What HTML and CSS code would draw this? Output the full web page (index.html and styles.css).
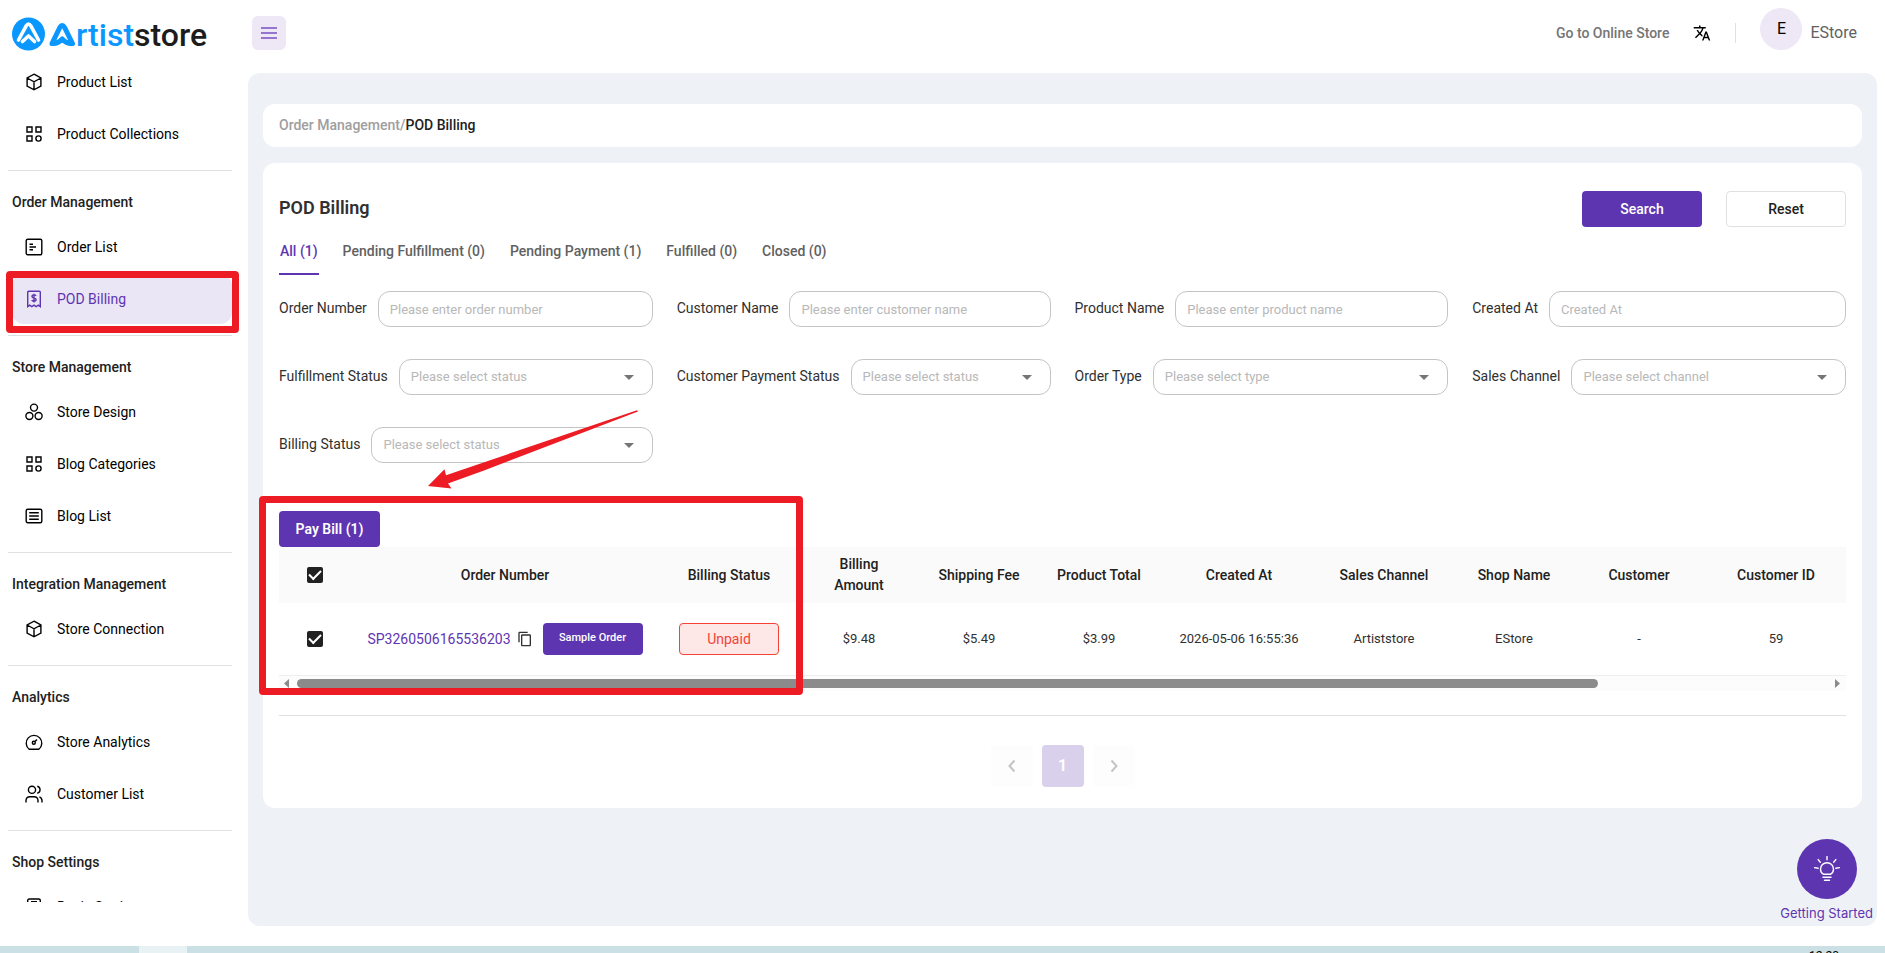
FILE: index.html
```html
<!DOCTYPE html>
<html lang="en">
<head>
<meta charset="utf-8">
<title>POD Billing - Artiststore</title>
<meta name="viewport" content="width=device-width, initial-scale=1">
<link rel="stylesheet" href="styles.css">
</head>
<body>
<svg class="defs" aria-hidden="true">
  <symbol id="i-box" viewBox="0 0 18 18"><path d="M9 1.2 15.9 5v8L9 16.8 2.1 13V5zM2.1 5 9 8.8 15.9 5M9 8.8v8" /></symbol>
  <symbol id="i-grid" viewBox="0 0 18 18"><path d="M2 2h5v5H2zM11 2h5v5h-5zM2 11h5v5H2z"/><circle cx="13.5" cy="13.5" r="2.6"/></symbol>
  <symbol id="i-order" viewBox="0 0 18 18"><rect x="1.2" y="1.2" width="15.6" height="15.6" rx="1.5"/><path d="M4.5 6.2H8M4.5 9H11M4.5 11.8H8"/></symbol>
  <symbol id="i-bill" viewBox="0 0 18 18"><path d="M2.7 16.6V2.2c0-.6.4-1 1-1h10.600c.6 0 1 .4 1 1v14.400l-2-1.400-2.100 1.400-2.200-1.400-2.200 1.400-2.100-1.400z"/><path d="M11 5.900C10.700 5.200 10 4.900 9 4.900c-1.200 0-2 .6-2 1.500 0 2.200 4.100.9 4.100 3.200 0 1-.9 1.600-2.100 1.600-1.100 0-1.900-.4-2.200-1.200M9 3.700v8.700"/></symbol>
  <symbol id="i-circles" viewBox="0 0 18 18"><circle cx="9" cy="4.600" r="3.500"/><circle cx="4.400" cy="13" r="3.500"/><circle cx="13.600" cy="13" r="3.500"/></symbol>
  <symbol id="i-list" viewBox="0 0 18 18"><rect x="1.200" y="2.200" width="15.600" height="13.600" rx="1.500"/><path d="M4.200 5.800h9.600M4.200 9h9.600M4.200 12.200h9.600"/></symbol>
  <symbol id="i-gauge" viewBox="0 0 18 18"><path d="M4.200 16.300A7.800 7.800 0 1 1 13.800 16.300z"/><circle cx="8.800" cy="9.800" r="1.500"/><path d="m10 8.600 2-2"/></symbol>
  <symbol id="i-users" viewBox="0 0 18 18"><circle cx="7" cy="4.800" r="3.600"/><path d="M1 17.500v-1.800c0-2.300 1.700-4 4-4h4c2.300 0 4 1.700 4 4v1.800M12.300 1.300a3.600 3.600 0 0 1 0 7M14.400 11.900c1.600.6 2.600 2 2.600 3.800v1.800"/></symbol>
  <symbol id="i-doc" viewBox="0 0 18 18"><rect x="2.700" y="1" width="12.600" height="16" rx="1.500"/><path d="M6 3.800h6M6 8h6"/></symbol>
  <symbol id="i-caret" viewBox="0 0 10 5"><path d="M0 0h10L5 5z"/></symbol>
</svg>

<div class="app">
  <aside class="sidebar">
    <a class="logo" href="#" aria-label="Artiststore">
      <svg class="logo-mark" viewBox="0 0 64 34" aria-hidden="true">
        <circle cx="16.500" cy="17" r="16.500" fill="#0a97ff"/>
        <path d="M6.500 23 14.300 8.700q2.200-3.500 4.400 0L26.500 23" fill="none" stroke="#fff" stroke-width="3.600" stroke-linecap="round" stroke-linejoin="round"/>
        <path d="m10.500 24.500 6-5.500 6 5.500" fill="none" stroke="#fff" stroke-width="3.600" stroke-linecap="round" stroke-linejoin="round"/>
        <path d="M40 26.500 47.800 10.500q2.400-4.200 4.800 0L60.500 26.500q-5.500.8-10.300-4.500-4.800 5.300-10.200 4.500z" fill="none" stroke="#0a97ff" stroke-width="5" stroke-linejoin="round"/>
      </svg>
      <span class="logo-text"><span class="logo-blue">rtist</span>store</span>
    </a>
    <nav class="nav">
      <div class="nav-group">
        <a class="nav-item" href="#"><svg class="icon"><use href="#i-box"/></svg>Product List</a>
        <a class="nav-item" href="#"><svg class="icon"><use href="#i-grid"/></svg>Product Collections</a>
      </div>
      <div class="nav-group">
        <h2 class="nav-title">Order Management</h2>
        <a class="nav-item" href="#"><svg class="icon"><use href="#i-order"/></svg>Order List</a>
        <a class="nav-item nav-item-active" href="#"><svg class="icon"><use href="#i-bill"/></svg>POD Billing<span class="mark mark-nav"></span></a>
      </div>
      <div class="nav-group">
        <h2 class="nav-title">Store Management</h2>
        <a class="nav-item" href="#"><svg class="icon"><use href="#i-circles"/></svg>Store Design</a>
        <a class="nav-item" href="#"><svg class="icon"><use href="#i-grid"/></svg>Blog Categories</a>
        <a class="nav-item" href="#"><svg class="icon"><use href="#i-list"/></svg>Blog List</a>
      </div>
      <div class="nav-group">
        <h2 class="nav-title">Integration Management</h2>
        <a class="nav-item" href="#"><svg class="icon"><use href="#i-box"/></svg>Store Connection</a>
      </div>
      <div class="nav-group">
        <h2 class="nav-title">Analytics</h2>
        <a class="nav-item" href="#"><svg class="icon"><use href="#i-gauge"/></svg>Store Analytics</a>
        <a class="nav-item" href="#"><svg class="icon"><use href="#i-users"/></svg>Customer List</a>
      </div>
      <div class="nav-group">
        <h2 class="nav-title">Shop Settings</h2>
        <a class="nav-item" href="#"><svg class="icon"><use href="#i-doc"/></svg>Basic Settings</a>
      </div>
    </nav>
  </aside>

  <div class="content">
    <header class="topbar">
      <button class="menu-btn" type="button" aria-label="Toggle menu">
        <svg viewBox="0 0 16 14" width="16" height="14"><path d="M0 2h16M0 7h16M0 12h16"/></svg>
      </button>
      <div class="topbar-right">
        <a class="store-link" href="#">Go to Online Store</a>
        <button class="lang-btn" type="button" aria-label="Language">
          <svg viewBox="0 0 24 24" width="18" height="18"><path d="m12.870 15.070-2.540-2.510.03-.03c1.740-1.940 2.980-4.170 3.710-6.530H17V4h-7V2H8v2H1v1.990h11.170C11.500 7.920 10.440 9.750 9 11.350 8.070 10.320 7.300 9.190 6.690 8h-2c.73 1.630 1.730 3.170 2.980 4.560l-5.090 5.020L4 19l5-5 3.110 3.110zM18.500 10h-2L12 22h2l1.120-3h4.750L21 22h2zm-2.620 7 1.620-4.330L19.120 17z"/></svg>
        </button>
        <span class="divider"></span>
        <button class="account" type="button"><span class="avatar">E</span><span class="account-name">EStore</span></button>
      </div>
    </header>

    <main class="main">
      <nav class="card crumbs" aria-label="Breadcrumb"><a class="crumb" href="#">Order Management</a><span class="crumb">/</span><span class="crumb-now">POD Billing</span></nav>

      <section class="card panel">
        <div class="panel-head">
          <h1 class="title">POD Billing</h1>
          <div class="actions">
            <button class="btn btn-primary btn-wide" type="button">Search</button>
            <button class="btn btn-outline btn-wide" type="button">Reset</button>
          </div>
        </div>

        <div class="tabs" role="tablist">
          <button class="tab tab-active" role="tab" type="button" aria-selected="true">All (1)</button>
          <button class="tab" role="tab" type="button">Pending Fulfillment (0)</button>
          <button class="tab" role="tab" type="button">Pending Payment (1)</button>
          <button class="tab" role="tab" type="button">Fulfilled (0)</button>
          <button class="tab" role="tab" type="button">Closed (0)</button>
        </div>

        <form class="filters">
          <div class="field"><label for="f-order">Order Number</label><input class="control" id="f-order" type="text" placeholder="Please enter order number"></div>
          <div class="field"><label for="f-name">Customer Name</label><input class="control" id="f-name" type="text" placeholder="Please enter customer name"></div>
          <div class="field"><label for="f-product">Product Name</label><input class="control" id="f-product" type="text" placeholder="Please enter product name"></div>
          <div class="field"><label for="f-created">Created At</label><input class="control" id="f-created" type="text" placeholder="Created At"></div>
          <div class="field"><label for="f-ful">Fulfillment Status</label><div class="select-box"><select class="control" id="f-ful"><option>Please select status</option></select><svg class="caret"><use href="#i-caret"/></svg></div></div>
          <div class="field"><label for="f-pay">Customer Payment Status</label><div class="select-box"><select class="control" id="f-pay"><option>Please select status</option></select><svg class="caret"><use href="#i-caret"/></svg></div></div>
          <div class="field"><label for="f-type">Order Type</label><div class="select-box"><select class="control" id="f-type"><option>Please select type</option></select><svg class="caret"><use href="#i-caret"/></svg></div></div>
          <div class="field"><label for="f-channel">Sales Channel</label><div class="select-box"><select class="control" id="f-channel"><option>Please select channel</option></select><svg class="caret"><use href="#i-caret"/></svg></div></div>
          <div class="field"><label for="f-bill">Billing Status</label><div class="select-box"><select class="control" id="f-bill"><option>Please select status</option></select><svg class="caret"><use href="#i-caret"/></svg></div></div>
        </form>

        <div class="billing">
          <button class="btn btn-primary btn-pay" type="button">Pay Bill (1)</button>
          <div class="table-wrap">
            <table class="table">
              <colgroup><col class="w-check"><col class="w-order"><col class="w-140"><col class="w-120"><col class="w-120"><col class="w-120"><col class="w-160"><col class="w-130"><col class="w-130"><col class="w-120"><col class="w-id"></colgroup>
              <thead>
                <tr>
                  <th><input class="check" type="checkbox" checked aria-label="Select all orders"></th>
                  <th>Order Number</th><th>Billing Status</th><th>Billing Amount</th><th>Shipping Fee</th><th>Product Total</th><th>Created At</th><th>Sales Channel</th><th>Shop Name</th><th>Customer</th><th>Customer ID</th>
                </tr>
              </thead>
              <tbody>
                <tr>
                  <td><input class="check" type="checkbox" checked aria-label="Select order SP3260506165536203"></td>
                  <td>
                    <div class="order-cell">
                      <a class="order-link" href="#">SP3260506165536203</a>
                      <button class="copy-btn" type="button" aria-label="Copy order number"><svg viewBox="0 0 24 24" width="16" height="16"><path d="M16 1H4c-1.100 0-2 .9-2 2v14h2V3h12zm3 4H8c-1.100 0-2 .9-2 2v14c0 1.100.9 2 2 2h11c1.100 0 2-.9 2-2V7c0-1.100-.9-2-2-2m0 16H8V7h11z"/></svg></button>
                      <button class="btn btn-primary btn-sample" type="button">Sample Order</button>
                    </div>
                  </td>
                  <td><span class="status">Unpaid</span></td>
                  <td>$9.48</td><td>$5.49</td><td>$3.99</td><td>2026-05-06 16:55:36</td><td>Artiststore</td><td>EStore</td><td>-</td><td>59</td>
                </tr>
              </tbody>
            </table>
          </div>
          <div class="scrollbar" aria-hidden="true">
            <svg viewBox="0 0 5 9" width="5" height="9"><path d="M5 0v9L0 4.500z"/></svg>
            <div class="scroll-track"><div class="scroll-thumb"></div></div>
            <svg viewBox="0 0 5 9" width="5" height="9"><path d="M0 0v9l5-4.500z"/></svg>
          </div>
          <span class="mark mark-table"></span>
          <svg class="arrow" viewBox="0 0 212 80" aria-hidden="true"><path d="M0 76 16.500 59.300 18 65.200 209 0.200 210 1.400 56 60.500 20 73.500 23.500 78.500z"/></svg>
        </div>

        <nav class="pager" aria-label="Pagination">
          <button class="page-btn" type="button" disabled aria-label="Previous page"><svg viewBox="0 0 8 14" width="8" height="14"><path d="M6.500 1.500 1.500 7l5 5.500"/></svg></button>
          <button class="page-btn page-now" type="button">1</button>
          <button class="page-btn" type="button" disabled aria-label="Next page"><svg viewBox="0 0 8 14" width="8" height="14"><path d="M1.500 1.500 6.500 7l-5 5.500"/></svg></button>
        </nav>
      </section>

      <button class="help" type="button">
        <span class="help-circle">
          <svg viewBox="0 0 26 26" width="26" height="26"><path d="M9.300 18.200c-1.800-1.200-2.800-2.900-2.800-5a6.500 6.500 0 0 1 13 0c0 2.100-1 3.800-2.800 5zM13 .5v3.200M4.200 3.600l2.100 2.600M21.800 3.600l-2.100 2.600M.5 11.600l3.700.6M25.500 11.600l-3.700.6M9 21.300h8M10.500 24.200h5"/></svg>
        </span>
        <span class="help-label">Getting Started</span>
      </button>
    </main>
  </div>
</div>

<footer class="taskbar"><span class="task"></span><span class="clock">12:20</span></footer>
</body>
</html>
```

FILE: styles.css
```css
:root {
  --purple: #5e35b1;
  --purple-soft: #ede7f6;
  --red: #ed1c24;
  --line: #e0e0e0;
  --surface: #eef2f6;
}

* { box-sizing: border-box; }

body {
  margin: 0;
  height: 100vh;
  display: flex;
  flex-direction: column;
  overflow: hidden;
  background: #fff;
  color: #212121;
  font: 14px/20px Roboto, "Liberation Sans", sans-serif;
}

button, input, select { font: inherit; color: inherit; }
button { border: 0; background: none; padding: 0; cursor: pointer; }
a { color: inherit; text-decoration: none; }
.defs { display: none; }

.app { flex: 1; min-height: 0; display: flex; }

/* Sidebar */
.sidebar { width: 240px; flex: none; display: flex; flex-direction: column; padding-bottom: 44px; }
.logo { height: 57px; flex: none; display: flex; align-items: center; padding: 10px 0 0 12px; }
.logo-mark { width: 64px; height: 34px; flex: none; }
.logo-text { padding-top: 2px; font-size: 32px; line-height: 34px; font-weight: 500; color: #1c1c1c; }
.logo-blue { color: #0a97ff; }
.nav { flex: 1; min-height: 0; overflow: hidden; padding: 0 8px; }
.nav-group { padding-bottom: 9px; }
.nav-group + .nav-group { border-top: 1px solid var(--line); }
.nav-title { margin: 0; padding: 21px 4px 10px; font-size: 14px; line-height: 20px; font-weight: 500; }
.nav-item {
  position: relative;
  display: flex;
  align-items: center;
  gap: 14px;
  height: 50px;
  margin: 0 0 2px 4px;
  padding-left: 13px;
  border-radius: 12px;
  color: #000;
}
.nav-item-active { background: #eae6f6; color: var(--purple); }
.icon { width: 18px; height: 18px; fill: none; stroke: currentColor; stroke-width: 1.4; }

/* Top bar */
.content { flex: 1; min-width: 0; display: flex; flex-direction: column; padding: 0 8px 20px; }
.topbar { height: 73px; flex: none; display: flex; justify-content: space-between; align-items: flex-start; padding: 8px 20px 0 4px; }
.menu-btn { width: 34px; height: 34px; margin-top: 8px; border-radius: 6px; background: var(--purple-soft); display: grid; place-items: center; }
.menu-btn svg { stroke: #9575cd; stroke-width: 2; }
.topbar-right { display: flex; align-items: center; height: 42px; }
.store-link { color: #757575; font-weight: 500; padding-top: 8px; }
.lang-btn { display: grid; margin: 8px 24px 0; }
.divider { width: 1px; height: 20px; margin: 8px 24px 0 0; background: var(--line); }
.account { display: flex; align-items: center; gap: 8px; font-size: 16px; line-height: 24px; color: #616161; }
.avatar { width: 42px; height: 42px; border-radius: 50%; background: var(--purple-soft); color: #000; display: grid; place-items: center; }
.account-name { padding-top: 7px; }

/* Main area */
.main { position: relative; flex: 1; min-height: 0; background: var(--surface); border-radius: 12px; padding: 31px 15px; display: flex; flex-direction: column; gap: 16px; }
.card { background: #fff; border-radius: 12px; }
.crumbs { padding: 11px 16px 12px; font-weight: 500; }
.crumb { color: #9e9e9e; }
.panel { padding: 28px 16px 21px; }
.panel-head { display: flex; justify-content: space-between; align-items: center; }
.title { margin: 0; padding-bottom: 2px; font-size: 18px; line-height: 24px; font-weight: 600; color: #303030; }
.actions { display: flex; gap: 24px; }
.btn { height: 36px; border-radius: 4px; font-weight: 500; }
.btn-wide { width: 120px; }
.btn-primary { background: var(--purple); color: #fff; }
.btn-outline { border: 1px solid var(--line); background: #fff; }
.tabs { display: flex; gap: 23px; }
.tab { height: 48px; padding: 2px 1px 0; border-bottom: 2px solid transparent; color: #616161; font-weight: 500; }
.tab-active { color: var(--purple); border-bottom-color: var(--purple); }

.filters { display: grid; grid-template-columns: repeat(4, minmax(0, 1fr)); gap: 32px 24px; padding-top: 16px; }
.field { display: flex; align-items: center; gap: 11px; }
.field label { padding-bottom: 2px; white-space: nowrap; color: #303030; }
.control {
  flex: 1;
  width: 100%;
  min-width: 0;
  height: 36px;
  padding: 0 11px;
  border: 1px solid #c4c4c4;
  border-radius: 12px;
  background: #fff;
  font-size: 13px;
  appearance: none;
}
.control::placeholder, select.control { color: #b8b8b8; opacity: 1; }
.select-box { flex: 1; min-width: 0; position: relative; display: flex; }
.caret { position: absolute; right: 19px; top: 16px; width: 10px; height: 5px; fill: #757575; pointer-events: none; }

/* Billing table */
.billing { position: relative; margin-top: 48px; padding-bottom: 24px; border-bottom: 1px solid var(--line); }
.btn-pay { display: block; width: 101px; font-weight: 600; }
.table-wrap { overflow: hidden; border-bottom: 1px solid #eee; }
.table { width: 1574px; min-width: 100%; table-layout: fixed; border-collapse: collapse; text-align: center; }
.w-check { width: 72px; }
.w-order { width: 308px; }
.w-120 { width: 120px; }
.w-130 { width: 130px; }
.w-140 { width: 140px; }
.w-160 { width: 160px; }
.table th { height: 56px; padding: 0 16px; background: #fafafa; font-weight: 500; line-height: 21px; }
.table td { height: 72px; padding: 0; font-size: 13px; color: #303030; }
.check { appearance: none; width: 16px; height: 16px; margin: 0 0 2px; border-radius: 2px; background: #212121; display: inline-grid; place-items: center; vertical-align: middle; }
.check::before { content: ""; width: 10px; height: 5px; margin-bottom: 3px; border: solid #fff; border-width: 0 0 2px 2px; transform: rotate(-45deg); }
.order-cell { display: flex; align-items: center; justify-content: center; }
.order-link { font-size: 14px; color: var(--purple); }
.copy-btn { display: grid; margin: 0 10px 0 6px; }
.copy-btn svg { fill: #303030; }
.btn-sample { width: 100px; height: 32px; padding-bottom: 2px; font-size: 11px; }
.status { display: inline-block; width: 100px; height: 32px; line-height: 30px; border: 1px solid #f44336; border-radius: 4px; background: #fee8e7; color: #f44336; font-size: 14px; }

.scrollbar { display: flex; align-items: center; gap: 8px; height: 15px; padding: 0 6px 0 5px; background: #fcfcfc; fill: #8b8b8b; }
.scroll-track { flex: 1; }
.scroll-thumb { width: 85%; height: 9px; border-radius: 5px; background: #8b8b8b; }

.pager { display: flex; justify-content: center; gap: 9px; padding-top: 29px; }
.page-btn { width: 42px; height: 42px; border-radius: 4px; background: #fdfdfd; display: grid; place-items: center; }
.page-btn svg { fill: none; stroke: #c4c4c4; stroke-width: 2; }
.page-now { background: #d9d0eb; color: #fff; font-size: 16px; font-weight: 600; }

/* Highlight marks */
.mark { position: absolute; border: 7px solid var(--red); border-radius: 4px; pointer-events: none; }
.mark-nav { inset: -3px -7px -9px -6px; }
.mark-table { inset: -15px auto 20px -20px; width: 544px; }
.arrow { position: absolute; left: 149px; top: -101px; width: 212px; height: 80px; fill: var(--red); pointer-events: none; }

/* Help button */
.help { position: absolute; right: 4px; bottom: 3px; display: flex; flex-direction: column; align-items: center; gap: 4px; color: var(--purple); }
.help-circle { width: 60px; height: 60px; border-radius: 50%; background: var(--purple); display: grid; place-items: center; }
.help-circle svg { fill: none; stroke: #fff; stroke-width: 1.4; stroke-linecap: round; }
.help-label { font: 13px/20px Inter, "Open Sans", sans-serif; }

/* Taskbar */
.taskbar { height: 7px; flex: none; overflow: hidden; display: flex; justify-content: space-between; background: #cbe0e4; }
.task { width: 48px; margin-left: 139px; background: #e8f2f4; }
.clock { margin-right: 46px; padding-top: 2px; font-size: 12px; line-height: 16px; color: #000; }
```
